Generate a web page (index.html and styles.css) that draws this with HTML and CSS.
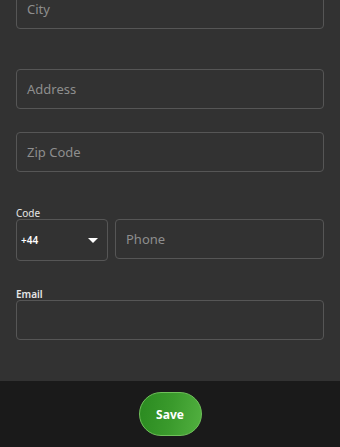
FILE: index.html
```html
<!DOCTYPE html>
<html>
<head>
<meta charset="utf-8">
<link rel="stylesheet" href="styles.css">
</head>
<body>
<div class="page">
  <form class="form">
    <div class="field city"><span class="ph">City</span></div>
    <div class="field address"><span class="ph">Address</span></div>
    <div class="field zip"><span class="ph">Zip Code</span></div>
    <div class="label code-label">Code</div>
    <div class="phone-row">
      <div class="field select"><span class="val">+44</span><span class="caret"></span></div>
      <div class="field phone"><span class="ph">Phone</span></div>
    </div>
    <div class="label email-label">Email</div>
    <div class="field email"></div>
  </form>
  <footer class="footer">
    <button class="save" type="button">Save</button>
  </footer>
</div>
</body>
</html>
```
FILE: styles.css
```css
html, body {
  margin: 0;
  padding: 0;
  background: #323232;
  font-family: "Noto Sans", "Open Sans", sans-serif;
  overflow: hidden;
}
.page {
  width: 340px;
  height: 447px;
  display: flex;
  flex-direction: column;
}
.form {
  flex: 1;
  padding: 0 16px;
  display: flex;
  flex-direction: column;
}
.field {
  box-sizing: border-box;
  height: 40px;
  border: 1px solid #565656;
  border-radius: 4px;
  display: flex;
  align-items: center;
  padding: 0 10px;
}
.ph {
  color: #8e8e8e;
  font-size: 13px;
}
.city { margin-top: -11px; }
.address { margin-top: 40px; }
.zip { margin-top: 23px; }
.label {
  color: #e6e6e6;
  font-size: 10px;
  line-height: 12px;
}
.code-label { margin-top: 35px; }
.phone-row {
  display: flex;
  gap: 7px;
}
.select {
  width: 92px;
  height: 42px;
  padding: 0 9px 0 4px;
  justify-content: space-between;
}
.val {
  color: #ffffff;
  font-size: 10px;
  font-weight: 600;
}
.caret {
  width: 0;
  height: 0;
  border-left: 5px solid transparent;
  border-right: 5px solid transparent;
  border-top: 5px solid #ffffff;
}
.phone {
  flex: 1;
  height: 40px;
}
.email-label {
  margin-top: 27px;
  font-weight: 600;
}
.footer {
  height: 66px;
  background: #1a1a1a;
  display: flex;
  justify-content: center;
  align-items: center;
}
.save {
  width: 63px;
  height: 44px;
  border-radius: 22px;
  border: 1px solid #6fc15a;
  background: linear-gradient(100deg, #2a8a20 0%, #3a9a2c 50%, #52b040 100%);
  color: #ffffff;
  font-family: "Noto Sans", sans-serif;
  font-weight: 700;
  font-size: 12px;
  padding: 0;
}
```
